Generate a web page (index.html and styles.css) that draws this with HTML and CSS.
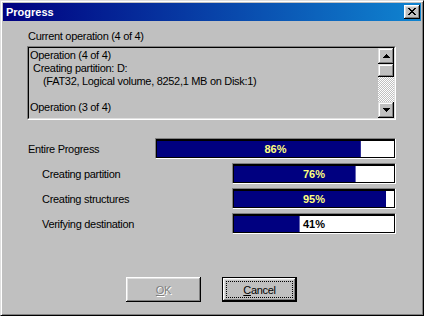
FILE: index.html
```html
<!DOCTYPE html>
<html>
<head>
<meta charset="utf-8">
<link rel="stylesheet" href="styles.css">
</head>
<body>
<div class="window">
  <div class="titlebar">
    <span class="title">Progress</span>
    <button class="close" aria-label="Close">
      <svg width="8" height="7" viewBox="0 0 8 7"><path fill="#000" d="M0 0h2v1H0z M6 0h2v1H6z M1 1h2v1H1z M5 1h2v1H5z M2 2h4v1H2z M3 3h2v1H3z M2 4h4v1H2z M1 5h2v1H1z M5 5h2v1H5z M0 6h2v1H0z M6 6h2v1H6z"/></svg>
    </button>
  </div>
  <div class="content">
    <div class="label">Current operation (4 of 4)</div>
    <div class="listbox">
      <div class="listbox-inner">
        <div class="list-lines">
          <div class="line">Operation (4 of 4)</div>
          <div class="line ind1">Creating partition: D:</div>
          <div class="line ind2">(FAT32, Logical volume, 8252,1 MB on Disk:1)</div>
          <div class="line"></div>
          <div class="line">Operation (3 of 4)</div>
        </div>
        <div class="scrollbar">
          <div class="sb-btn">
            <svg width="7" height="4" viewBox="0 0 7 4"><path fill="#000" d="M3 0h1v1H3z M2 1h3v1H2z M1 2h5v1H1z M0 3h7v1H0z"/></svg>
          </div>
          <div class="sb-thumb"></div>
          <div class="sb-track"></div>
          <div class="sb-btn">
            <svg width="7" height="4" viewBox="0 0 7 4"><path fill="#000" d="M0 0h7v1H0z M1 1h5v1H1z M2 2h3v1H2z M3 3h1v1H3z"/></svg>
          </div>
        </div>
      </div>
    </div>

    <div class="progress">
      <div class="row">
        <div class="row-label">Entire Progress</div>
        <div class="bar">
          <div class="bar-inner">
            <div class="bar-text">86%</div>
            <div class="bar-fill" style="clip-path: inset(0 14% 0 0)"><div class="bar-text">86%</div></div>
          </div>
        </div>
      </div>
      <div class="row sub">
        <div class="row-label">Creating partition</div>
        <div class="bar">
          <div class="bar-inner">
            <div class="bar-text">76%</div>
            <div class="bar-fill" style="clip-path: inset(0 24% 0 0)"><div class="bar-text">76%</div></div>
          </div>
        </div>
      </div>
      <div class="row sub">
        <div class="row-label">Creating structures</div>
        <div class="bar">
          <div class="bar-inner">
            <div class="bar-text">95%</div>
            <div class="bar-fill" style="clip-path: inset(0 5% 0 0)"><div class="bar-text">95%</div></div>
          </div>
        </div>
      </div>
      <div class="row sub">
        <div class="row-label">Verifying destination</div>
        <div class="bar">
          <div class="bar-inner">
            <div class="bar-text">41%</div>
            <div class="bar-fill" style="clip-path: inset(0 59% 0 0)"><div class="bar-text">41%</div></div>
          </div>
        </div>
      </div>
    </div>

    <div class="buttons">
      <button class="btn disabled" disabled><span class="ul">O</span>K</button>
      <button class="btn default"><span class="ul">C</span>ancel</button>
    </div>
  </div>
</div>
</body>
</html>
```

FILE: styles.css
```css
* { box-sizing: border-box; }
html, body { margin: 0; padding: 0; }
body {
  width: 424px;
  height: 316px;
  background: #c0c0c0;
  font-family: "Liberation Sans", Arial, sans-serif;
  font-size: 11px;
  letter-spacing: -0.3px;
  color: #000;
}
.window {
  width: 424px;
  height: 316px;
  background: #c0c0c0;
  border: 1px solid;
  border-color: #dfdfdf #000 #000 #dfdfdf;
  box-shadow: inset 1px 1px #fff, inset -1px -1px #808080;
  padding: 2px;
  display: flex;
  flex-direction: column;
}
.titlebar {
  height: 18px;
  flex: none;
  background: linear-gradient(to right, #000080, #1084d0);
  display: flex;
  align-items: center;
  padding: 0 1px 0 3px;
}
.title {
  flex: 1;
  color: #fff;
  font-weight: bold;
  letter-spacing: 0;
  line-height: 18px;
}
.close {
  width: 16px;
  height: 14px;
  padding: 0;
  border: none;
  background: #c0c0c0;
  box-shadow: inset -1px -1px #000, inset 1px 1px #fff, inset -2px -2px #808080, inset 2px 2px #dfdfdf;
  display: flex;
  align-items: center;
  justify-content: center;
}
.close svg { display: block; margin: 0 0 1px 0; }
.content {
  flex: 1;
  padding: 9px 0 0 24px;
}
.label {
  line-height: 13px;
  height: 13px;
  padding-left: 1px;
}
.listbox {
  margin-top: 3px;
  width: 369px;
  height: 74px;
  border: 1px solid;
  border-color: #808080 #fff #fff #808080;
}
.listbox-inner {
  height: 100%;
  border: 1px solid;
  border-color: #000 #dfdfdf #dfdfdf #000;
  display: flex;
}
.list-lines {
  flex: 1;
  padding: 1px 0 0 1px;
  overflow: hidden;
}
.line {
  height: 13px;
  line-height: 13px;
  white-space: nowrap;
}
.line.ind1 { padding-left: 3px; }
.line.ind2 { padding-left: 13px; }
.scrollbar {
  width: 16px;
  flex: none;
  display: flex;
  flex-direction: column;
}
.sb-btn, .sb-thumb {
  background: #c0c0c0;
  box-shadow: inset -1px -1px #000, inset 1px 1px #dfdfdf, inset -2px -2px #808080, inset 2px 2px #fff;
}
.sb-btn {
  height: 16px;
  flex: none;
  display: flex;
  align-items: center;
  justify-content: center;
}
.sb-btn svg { display: block; }
.sb-thumb { height: 13px; flex: none; }
.sb-track {
  flex: 1;
  background-image: conic-gradient(#fff 25%, #c0c0c0 0 50%, #fff 0 75%, #c0c0c0 0);
  background-size: 2px 2px;
}
.progress {
  margin-top: 18px;
  width: 369px;
  display: flex;
  flex-direction: column;
  gap: 4px;
}
.row {
  display: flex;
  align-items: center;
  height: 21px;
}
.row-label {
  flex: 1;
  padding-left: 1px;
  padding-top: 2px;
  line-height: 13px;
}
.row.sub .row-label { padding-left: 15px; }
.bar {
  width: 241px;
  height: 21px;
  flex: none;
  border: 1px solid;
  border-color: #808080 #fff #fff #808080;
}
.row.sub .bar { width: 164px; }
.bar-inner {
  height: 100%;
  border: 1px solid #000;
  border-top-width: 2px;
  background: #fff;
  position: relative;
}
.bar-text {
  position: absolute;
  inset: 0;
  display: flex;
  align-items: center;
  justify-content: center;
  font-weight: bold;
  letter-spacing: 0;
  color: #000;
}
.bar-fill {
  position: absolute;
  inset: 0;
  background: #000080;
}
.bar-fill .bar-text { color: #ffff80; }
.buttons {
  margin-top: 43px;
  padding-left: 99px;
  display: flex;
  gap: 21px;
}
.btn {
  width: 75px;
  height: 25px;
  padding: 0;
  border: none;
  background: #c0c0c0;
  font-family: inherit;
  font-size: 11px;
  letter-spacing: -0.3px;
  color: #000;
  box-shadow: inset -1px -1px #000, inset 1px 1px #fff, inset -2px -2px #808080, inset 2px 2px #dfdfdf;
  position: relative;
}
.btn.disabled {
  color: #808080;
  text-shadow: 1px 1px #fff;
}
.btn.default {
  border: 1px solid #000;
}
.btn.default::after {
  content: "";
  position: absolute;
  inset: 3px;
  border: 1px dotted #000;
}
.ul { text-decoration: underline; }
```
